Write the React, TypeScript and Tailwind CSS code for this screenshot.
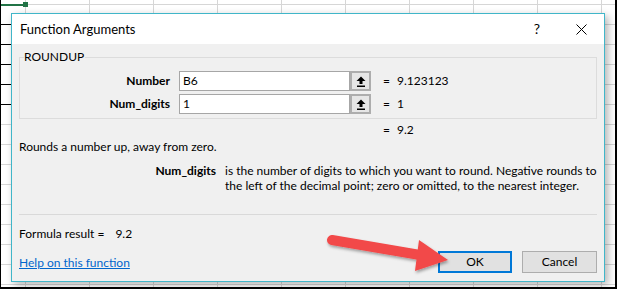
import React from "react";

function UpArrowIcon() {
  return (
    <svg width="10" height="11" viewBox="0 0 10 11">
      <path d="M5 0.5 L9.5 5 L6.5 5 L6.5 8 L3.5 8 L3.5 5 L0.5 5 Z" fill="#000" />
      <rect x="1" y="9.5" width="8" height="1.5" fill="#000" />
    </svg>
  );
}

function RefButton() {
  return (
    <div className="flex h-[20px] w-[21px] items-center justify-center border-2 border-[#adadad] bg-[#e6e6e6]">
      <UpArrowIcon />
    </div>
  );
}

function ArgRow({ label, value, result }: { label: string; value: string; result: string }) {
  return (
    <div className="flex items-center">
      <div className="w-[150px] text-right font-bold">{label}</div>
      <div className="ml-[9px] flex h-[20px] w-[171px] items-center border border-[#a6a6a6] bg-white pl-[3px]">
        {value}
      </div>
      <RefButton />
      <div className="ml-[12px] w-[14px]">=</div>
      <div>{result}</div>
    </div>
  );
}

export default function App() {
  return (
    <div className="relative h-[289px] w-[617px] overflow-hidden border-b-2 border-l border-r-2 border-black bg-white bg-[linear-gradient(to_right,#d6d6d6_1px,transparent_1px),linear-gradient(to_bottom,#d6d6d6_1px,transparent_1px)] bg-[size:64px_20px] bg-[position:24px_4px] font-['Lato',sans-serif] text-[12px] leading-[16px] text-black">
      {/* spreadsheet decorations */}
      <div className="absolute left-0 top-[4px] h-[2px] w-[24px] bg-[#217346]" />
      <div className="absolute left-[22px] top-[2px] h-[5px] w-[5px] bg-[#217346]" />
      <div className="absolute left-0 top-[24px] flex w-[11px] flex-col gap-[19px]">
        <div className="h-px bg-black" />
        <div className="h-px bg-black" />
        <div className="h-px bg-black" />
        <div className="h-px bg-black" />
        <div className="h-px bg-black" />
      </div>

      {/* dialog window */}
      <div className="absolute left-[10px] top-[13px] flex h-[269px] w-[594px] flex-col border border-[#40b6c9] bg-[#f0f0f0] shadow-[3px_3px_8px_rgba(0,0,0,0.3)]">
        <div className="flex h-[30px] items-center bg-white pl-[8px]">
          <div className="text-[13px]">Function Arguments</div>
          <div className="ml-auto mr-[36px] text-[14px]">?</div>
          <svg width="11" height="11" viewBox="0 0 11 11" className="mr-[17px]">
            <path d="M0.5 0.5 L10.5 10.5 M10.5 0.5 L0.5 10.5" stroke="#000" strokeWidth="1" />
          </svg>
        </div>

        <div className="flex flex-1 flex-col px-[7px]">
          {/* group box */}
          <div className="relative mt-[13px] flex h-[62px] flex-col gap-[3px] border border-[#dcdcdc] pt-[13px]">
            <div className="absolute left-[4px] top-[-9px] bg-[#f0f0f0] pr-[1px]">ROUNDUP</div>
            <ArgRow label="Number" value="B6" result="9.123123" />
            <ArgRow label="Num_digits" value="1" result="1" />
          </div>

          <div className="mt-[3px] flex">
            <div className="ml-[364px] w-[14px]">=</div>
            <div>9.2</div>
          </div>

          <div className="mt-[1px]">Rounds a number up, away from zero.</div>

          <div className="mt-[9px] flex leading-[14.5px]">
            <div className="w-[197px] text-right font-bold">Num_digits</div>
            <div className="ml-[9px] flex w-[372px] flex-col whitespace-nowrap">
              <span>is the number of digits to which you want to round. Negative rounds to</span>
              <span>the left of the decimal point; zero or omitted, to the nearest integer.</span>
            </div>
          </div>

          <div className="mt-[21px] h-px bg-[#d9d9d9]" />

          <div className="mt-[11px] flex">
            <span>Formula result =</span>
            <span className="ml-[11px]">9.2</span>
          </div>

          <div className="mt-[9px] flex items-center">
            <a className="mt-[2px] text-[#0066cc] underline">Help on this function</a>
            <div className="ml-auto flex gap-[10px]">
              <div className="flex h-[22px] w-[74px] items-center justify-center border-2 border-[#0078d7] bg-[#e1e1e1]">OK</div>
              <div className="flex h-[22px] w-[75px] items-center justify-center border border-[#adadad] bg-[#e1e1e1]">Cancel</div>
            </div>
          </div>
        </div>
      </div>

      {/* red callout arrow */}
      <svg className="pointer-events-none absolute left-0 top-0" width="617" height="289" viewBox="0 0 617 289">
        <defs>
          <filter id="sh" x="-20%" y="-50%" width="140%" height="200%">
            <feDropShadow dx="1" dy="2" stdDeviation="1.5" floodColor="#000" floodOpacity="0.35" />
          </filter>
        </defs>
        <g filter="url(#sh)" fill="#f24848">
          <path d="M331 240 L419 255" stroke="#f24848" strokeWidth="10" strokeLinecap="round" />
          <path d="M418 240 L447 260 L414 271 Z" />
        </g>
      </svg>
    </div>
  );
}
